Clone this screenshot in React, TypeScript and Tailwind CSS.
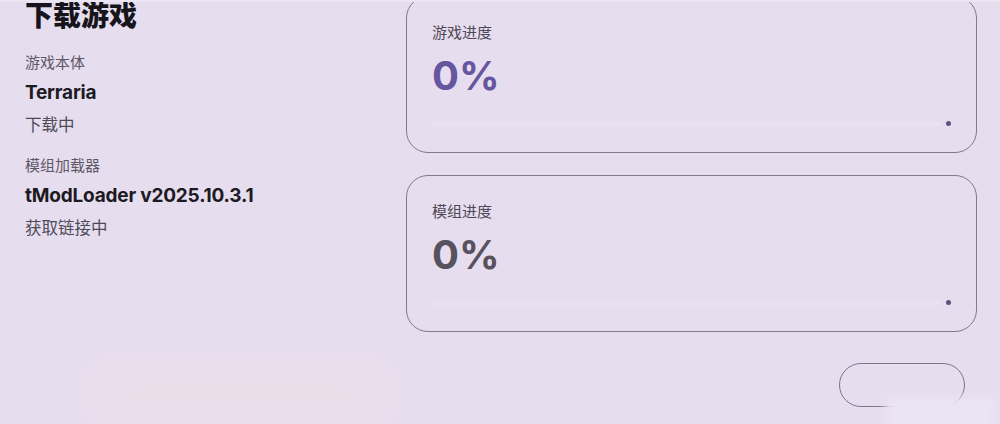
import React from "react";

const font = { fontFamily: '"Inter", "Noto Sans CJK SC", sans-serif' };

interface InfoProps {
  label: string;
  value: string;
  status: string;
}

const InfoBlock = ({ label, value, status }: InfoProps) => (
  <div className="flex flex-col">
    <p className="h-[30px] leading-[30px] text-[15px] text-[#5e5866]">{label}</p>
    <p className="h-[30px] leading-[30px] text-[19px] font-bold text-[#1c1a22] tracking-[-0.2px]">
      {value}
    </p>
    <p className="mt-[2px] h-[30px] leading-[30px] text-[16.5px] text-[#4f4a57]">{status}</p>
  </div>
);

interface ProgressProps {
  label: string;
  percent: number;
  accent: string;
}

const ProgressCard = ({ label, percent, accent }: ProgressProps) => (
  <div className="relative h-[157px] rounded-[22px] border-[1.5px] border-[#817b8d] px-[25px]">
    <p className="mt-[25px] h-[22px] leading-[22px] text-[15px] text-[#4d4855]">{label}</p>
    <p
      className="mt-[8px] h-[48px] leading-[48px] text-[40px] font-bold"
      style={{ color: accent }}
    >
      {percent}%
    </p>
    <div className="mt-[21px] flex items-center gap-[6px]">
      <div className="h-[4px] flex-1 rounded-full bg-[#e9e2f0]">
        <div className="h-full rounded-full" style={{ width: `${percent}%`, background: accent }} />
      </div>
      <div className="h-[5px] w-[5px] rounded-full bg-[#5a5380]" />
    </div>
  </div>
);

export default function App() {
  return (
    <div
      className="relative h-[424px] w-[1000px] overflow-hidden bg-[#e6ddef] border-t-[2px] border-[#ece6f3]"
      style={font}
    >
      <div className="flex">
        <div className="w-[406px] pl-[25px] -mt-[2px]">
          <h1 className="h-[32px] leading-[32px] text-[28px] font-black text-[#17151c]">下载游戏</h1>
          <div className="mt-[16px]">
            <InfoBlock label="游戏本体" value="Terraria" status="下载中" />
          </div>
          <div className="mt-[11px]">
            <InfoBlock label="模组加载器" value="tModLoader v2025.10.3.1" status="获取链接中" />
          </div>
        </div>

        <div className="-mt-[6px] flex w-[571px] flex-col gap-[22px]">
          <ProgressCard label="游戏进度" percent={0} accent="#6656a0" />
          <ProgressCard label="模组进度" percent={0} accent="#57525e" />
          <div className="flex justify-end pr-[12px] pt-[9px]">
            <button className="h-[44px] w-[126px] rounded-full border-[1.5px] border-[#7b758a]" />
          </div>
        </div>
      </div>

      {/* blurred toast and corner glare */}
      <div className="pointer-events-none absolute left-[80px] top-[352px] h-[80px] w-[320px] rounded-[30px] bg-[#ebdeeb] blur-[18px]" />
      <div className="pointer-events-none absolute left-[885px] top-[395px] h-[40px] w-[110px] bg-[#ebe4f4] blur-[4px]" />
    </div>
  );
}
